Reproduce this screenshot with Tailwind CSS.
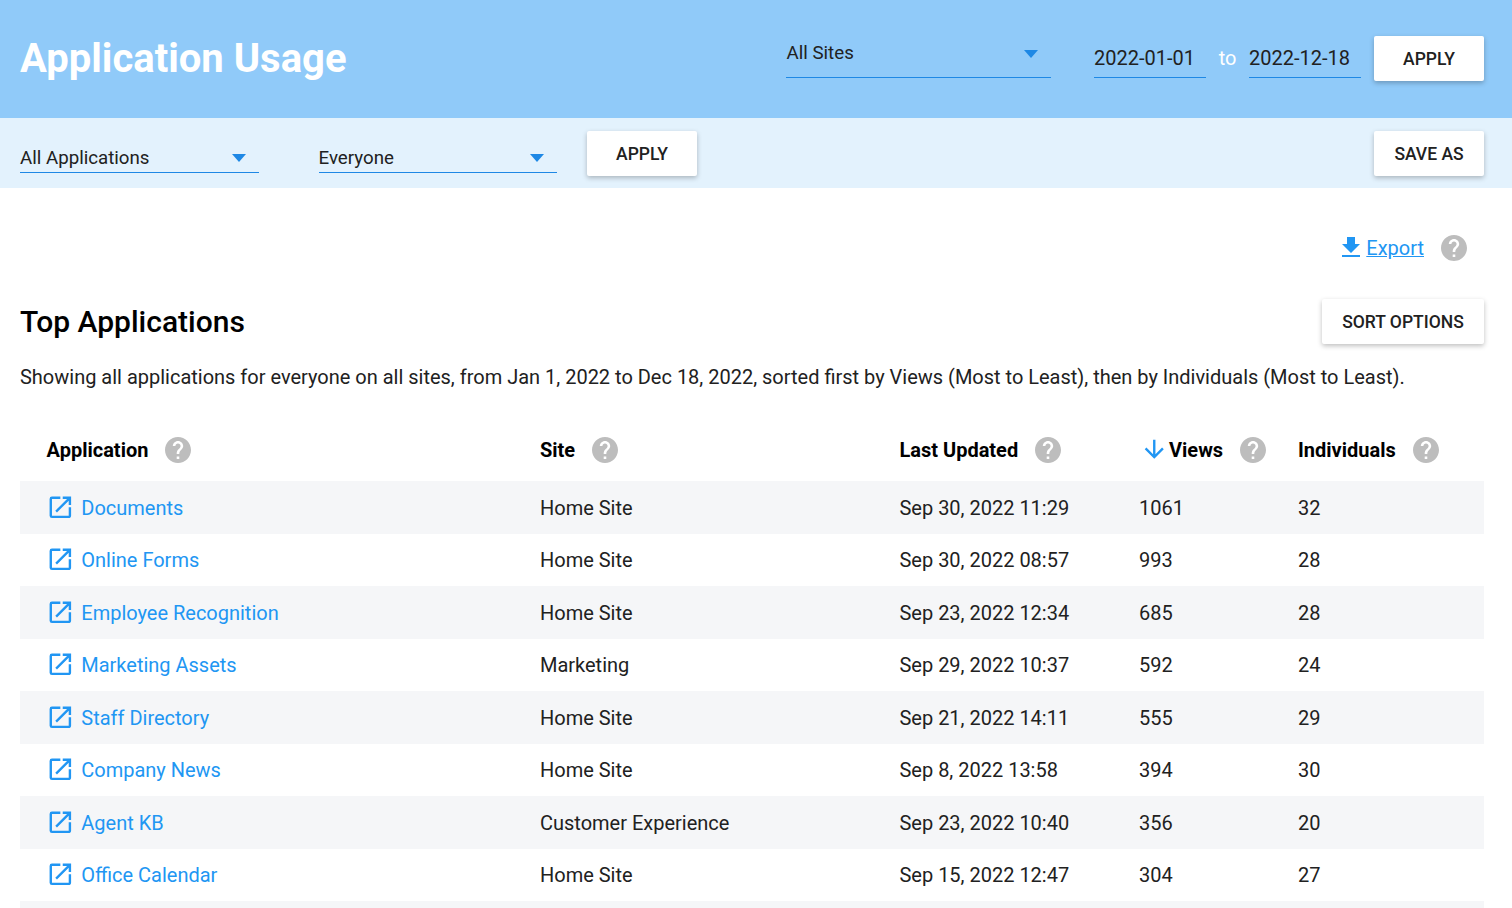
<!DOCTYPE html>
<html><head><meta charset="utf-8"><script src="https://cdn.jsdelivr.net/npm/@tailwindcss/browser@4"></script></head>
<body class="font-[Roboto,sans-serif] text-[19.99px] text-[#212121] bg-white h-[908px] overflow-hidden">
<header class="h-[118px] bg-[#90caf9] flex items-start pl-5 pr-[28px]">
  <h1 class="text-[40px] leading-[44px] font-bold text-white mt-[37px]">Application Usage</h1>
  <div class="ml-auto w-[265px] h-[36px] mt-[42px] border-b border-[#1e88e5] flex justify-between pr-[13px] text-[18.72px] leading-[22px]"><span class="ml-[0.5px]">All Sites</span><svg class="w-[14px] h-[8px] mt-[8px]" viewBox="0 0 14 8"><path d="M0 0h14L7 8z" fill="#1e88e5"/></svg></div>
  <div class="ml-[43px] w-[112px] h-[36px] mt-[42px] border-b border-[#1e88e5] leading-[33px]">2022-01-01</div>
  <div class="w-[43px] mt-[42px] text-center text-white leading-[33px]">to</div>
  <div class="w-[112px] h-[36px] mt-[42px] border-b border-[#1e88e5] leading-[33px]">2022-12-18</div>
  <button class="ml-[13px] mt-[36px] w-[110px] h-[45px] pt-[2px] bg-white rounded-[2px] shadow-[0_2px_5px_rgba(0,0,0,0.25)] text-[17.5px] font-medium">APPLY</button>
</header>
<div class="h-[70px] bg-[#e3f2fd] flex items-start pl-5 pr-[28px]">
  <div class="w-[239px] h-[31px] mt-[24px] border-b border-[#1e88e5] flex justify-between pr-[13px] text-[18.72px] leading-[33px]"><span>All Applications</span><svg class="w-[14px] h-[8px] mt-[12px]" viewBox="0 0 14 8"><path d="M0 0h14L7 8z" fill="#1e88e5"/></svg></div>
  <div class="ml-[60px] w-[238px] h-[31px] mt-[24px] border-b border-[#1e88e5] flex justify-between pr-[13px] text-[18.72px] leading-[33px]"><span class="-ml-[0.5px]">Everyone</span><svg class="w-[14px] h-[8px] mt-[12px]" viewBox="0 0 14 8"><path d="M0 0h14L7 8z" fill="#1e88e5"/></svg></div>
  <button class="ml-[30px] mt-[13px] w-[110px] h-[45px] pt-[2px] bg-white rounded-[2px] shadow-[0_2px_5px_rgba(0,0,0,0.25)] text-[17.5px] font-medium">APPLY</button>
  <button class="ml-auto mt-[13px] w-[110px] h-[45px] pt-[2px] bg-white rounded-[2px] shadow-[0_2px_5px_rgba(0,0,0,0.25)] text-[17.5px] font-medium">SAVE AS</button>
</div>
<main class="px-5 pr-[28px]">
  <div class="flex justify-end items-center h-[26px] mt-[47px] pr-[17px]">
    <svg class="w-[18px] h-[20px] mr-[6px] -mt-[2px]" viewBox="0 0 18 20"><path d="M5 0h8v7h5l-9 9-9-9h5zM0 18h18v2H0z" fill="#2196f3"/></svg>
    <a class="text-[#2196f3] underline pt-[2px]">Export</a>
    <svg class="w-[26px] h-[26px] ml-[17px]" viewBox="2 2 20 20"><path fill="#bdbdbd" d="M12 2C6.48 2 2 6.48 2 12s4.48 10 10 10 10-4.48 10-10S17.52 2 12 2zm1 17h-2v-2h2v2zm2.07-7.75l-.9.92C13.45 12.9 13 13.5 13 15h-2v-.5c0-1.1.45-2.1 1.17-2.83l1.24-1.26c.37-.36.59-.86.59-1.41 0-1.1-.9-2-2-2s-2 .9-2 2H8c0-2.21 1.79-4 4-4s4 1.79 4 4c0 .88-.36 1.68-.93 2.25z"/></svg>
  </div>
  <div class="flex justify-between items-center mt-[37px] h-[46px]">
    <h2 class="text-[30px] font-medium text-black">Top Applications</h2>
    <button class="w-[162px] h-[45px] pt-[2px] bg-white rounded-[2px] shadow-[0_2px_5px_rgba(0,0,0,0.25)] text-[17.5px] font-medium">SORT OPTIONS</button>
  </div>
  <p class="mt-[19px] leading-[28px]">Showing all applications for everyone on all sites, from Jan 1, 2022 to Dec 18, 2022, sorted first by Views (Most to Least), then by Individuals (Most to Least).</p>
  <div class="mt-[28px] w-[1464px] grid grid-cols-[493px_359.5px_239.5px_159px_213px] grid-rows-[62px_repeat(8,52.5px)_7px] items-center [&>*]:h-full [&>*]:flex [&>*]:items-center [&>*]:pt-[2.8px] [&_svg]:-mt-[3.6px]">
    <div class="font-bold text-black pl-[26.6px]">Application<svg class="w-[26px] h-[26px] ml-[17px]" viewBox="2 2 20 20"><path fill="#bdbdbd" d="M12 2C6.48 2 2 6.48 2 12s4.48 10 10 10 10-4.48 10-10S17.52 2 12 2zm1 17h-2v-2h2v2zm2.070-7.750l-.9.92C13.45 12.9 13 13.5 13 15h-2v-.5c0-1.1.45-2.1 1.17-2.83l1.24-1.26c.37-.36.59-.86.59-1.41 0-1.1-.9-2-2-2s-2 .9-2 2H8c0-2.21 1.79-4 4-4s4 1.79 4 4c0 .88-.36 1.68-.93 2.25z"/></svg></div>
    <div class="font-bold text-black pl-[27px]">Site<svg class="w-[26px] h-[26px] ml-[17px]" viewBox="2 2 20 20"><path fill="#bdbdbd" d="M12 2C6.48 2 2 6.48 2 12s4.48 10 10 10 10-4.48 10-10S17.52 2 12 2zm1 17h-2v-2h2v2zm2.070-7.750l-.9.92C13.45 12.9 13 13.5 13 15h-2v-.5c0-1.1.45-2.1 1.17-2.83l1.24-1.26c.37-.36.59-.86.59-1.41 0-1.1-.9-2-2-2s-2 .9-2 2H8c0-2.21 1.79-4 4-4s4 1.79 4 4c0 .88-.36 1.68-.93 2.25z"/></svg></div>
    <div class="font-bold text-black pl-[27px]">Last Updated<svg class="w-[26px] h-[26px] ml-[17px]" viewBox="2 2 20 20"><path fill="#bdbdbd" d="M12 2C6.48 2 2 6.48 2 12s4.48 10 10 10 10-4.48 10-10S17.52 2 12 2zm1 17h-2v-2h2v2zm2.070-7.750l-.9.92C13.45 12.9 13 13.5 13 15h-2v-.5c0-1.1.45-2.1 1.17-2.83l1.24-1.26c.37-.36.59-.86.59-1.41 0-1.1-.9-2-2-2s-2 .9-2 2H8c0-2.21 1.79-4 4-4s4 1.79 4 4c0 .88-.36 1.68-.93 2.25z"/></svg></div>
    <div class="font-bold text-black pl-[27.5px]"><svg class="w-[28.5px] h-[28.500px] mr-[1px]" viewBox="0 0 24 24"><path fill="#2196f3" d="M20 12l-1.41-1.41L13 16.17V4h-2v12.17l-5.58-5.59L4 12l8 8 8-8z"/></svg>Views<svg class="w-[26px] h-[26px] ml-[17px]" viewBox="2 2 20 20"><path fill="#bdbdbd" d="M12 2C6.48 2 2 6.48 2 12s4.48 10 10 10 10-4.48 10-10S17.52 2 12 2zm1 17h-2v-2h2v2zm2.070-7.750l-.9.92C13.45 12.9 13 13.5 13 15h-2v-.5c0-1.1.45-2.1 1.17-2.83l1.24-1.26c.37-.36.59-.86.59-1.41 0-1.1-.9-2-2-2s-2 .9-2 2H8c0-2.21 1.79-4 4-4s4 1.79 4 4c0 .88-.36 1.68-.93 2.25z"/></svg></div>
    <div class="font-bold text-black pl-[27px]">Individuals<svg class="w-[26px] h-[26px] ml-[17px]" viewBox="2 2 20 20"><path fill="#bdbdbd" d="M12 2C6.48 2 2 6.48 2 12s4.48 10 10 10 10-4.48 10-10S17.52 2 12 2zm1 17h-2v-2h2v2zm2.070-7.750l-.9.92C13.45 12.9 13 13.5 13 15h-2v-.5c0-1.1.45-2.1 1.17-2.83l1.24-1.26c.37-.36.59-.86.59-1.41 0-1.1-.9-2-2-2s-2 .9-2 2H8c0-2.21 1.79-4 4-4s4 1.79 4 4c0 .88-.36 1.68-.93 2.25z"/></svg></div>

    <div class="bg-[#f5f6f8] pl-[26px] text-[#2196f3]"><svg class="w-[28.7px] h-[28.7px] mr-[6.6px]" viewBox="0 0 24 24"><path fill="#2196f3" d="M19 19H5V5h7V3H5a2 2 0 0 0-2 2v14a2 2 0 0 0 2 2h14c1.100 0 2-.9 2-2v-7h-2v7zM14 3v2h3.590l-9.830 9.830 1.410 1.410L19 6.410V10h2V3h-7z"/></svg>Documents</div><div class="bg-[#f5f6f8] pl-[27px]">Home Site</div><div class="bg-[#f5f6f8] pl-[27px]">Sep 30, 2022 11:29</div><div class="bg-[#f5f6f8] pl-[27px]">1061</div><div class="bg-[#f5f6f8] pl-[27px]">32</div>
    <div class="pl-[26px] text-[#2196f3]"><svg class="w-[28.7px] h-[28.7px] mr-[6.6px]" viewBox="0 0 24 24"><path fill="#2196f3" d="M19 19H5V5h7V3H5a2 2 0 0 0-2 2v14a2 2 0 0 0 2 2h14c1.100 0 2-.9 2-2v-7h-2v7zM14 3v2h3.590l-9.830 9.830 1.410 1.410L19 6.410V10h2V3h-7z"/></svg>Online Forms</div><div class="pl-[27px]">Home Site</div><div class="pl-[27px]">Sep 30, 2022 08:57</div><div class="pl-[27px]">993</div><div class="pl-[27px]">28</div>
    <div class="bg-[#f5f6f8] pl-[26px] text-[#2196f3]"><svg class="w-[28.7px] h-[28.7px] mr-[6.6px]" viewBox="0 0 24 24"><path fill="#2196f3" d="M19 19H5V5h7V3H5a2 2 0 0 0-2 2v14a2 2 0 0 0 2 2h14c1.100 0 2-.9 2-2v-7h-2v7zM14 3v2h3.590l-9.830 9.830 1.410 1.410L19 6.410V10h2V3h-7z"/></svg>Employee Recognition</div><div class="bg-[#f5f6f8] pl-[27px]">Home Site</div><div class="bg-[#f5f6f8] pl-[27px]">Sep 23, 2022 12:34</div><div class="bg-[#f5f6f8] pl-[27px]">685</div><div class="bg-[#f5f6f8] pl-[27px]">28</div>
    <div class="pl-[26px] text-[#2196f3]"><svg class="w-[28.7px] h-[28.7px] mr-[6.6px]" viewBox="0 0 24 24"><path fill="#2196f3" d="M19 19H5V5h7V3H5a2 2 0 0 0-2 2v14a2 2 0 0 0 2 2h14c1.100 0 2-.9 2-2v-7h-2v7zM14 3v2h3.590l-9.830 9.830 1.410 1.410L19 6.410V10h2V3h-7z"/></svg>Marketing Assets</div><div class="pl-[27px]">Marketing</div><div class="pl-[27px]">Sep 29, 2022 10:37</div><div class="pl-[27px]">592</div><div class="pl-[27px]">24</div>
    <div class="bg-[#f5f6f8] pl-[26px] text-[#2196f3]"><svg class="w-[28.7px] h-[28.7px] mr-[6.6px]" viewBox="0 0 24 24"><path fill="#2196f3" d="M19 19H5V5h7V3H5a2 2 0 0 0-2 2v14a2 2 0 0 0 2 2h14c1.100 0 2-.9 2-2v-7h-2v7zM14 3v2h3.590l-9.830 9.830 1.410 1.410L19 6.410V10h2V3h-7z"/></svg>Staff Directory</div><div class="bg-[#f5f6f8] pl-[27px]">Home Site</div><div class="bg-[#f5f6f8] pl-[27px]">Sep 21, 2022 14:11</div><div class="bg-[#f5f6f8] pl-[27px]">555</div><div class="bg-[#f5f6f8] pl-[27px]">29</div>
    <div class="pl-[26px] text-[#2196f3]"><svg class="w-[28.7px] h-[28.7px] mr-[6.6px]" viewBox="0 0 24 24"><path fill="#2196f3" d="M19 19H5V5h7V3H5a2 2 0 0 0-2 2v14a2 2 0 0 0 2 2h14c1.100 0 2-.9 2-2v-7h-2v7zM14 3v2h3.590l-9.830 9.830 1.410 1.410L19 6.410V10h2V3h-7z"/></svg>Company News</div><div class="pl-[27px]">Home Site</div><div class="pl-[27px]">Sep 8, 2022 13:58</div><div class="pl-[27px]">394</div><div class="pl-[27px]">30</div>
    <div class="bg-[#f5f6f8] pl-[26px] text-[#2196f3]"><svg class="w-[28.7px] h-[28.7px] mr-[6.6px]" viewBox="0 0 24 24"><path fill="#2196f3" d="M19 19H5V5h7V3H5a2 2 0 0 0-2 2v14a2 2 0 0 0 2 2h14c1.100 0 2-.9 2-2v-7h-2v7zM14 3v2h3.590l-9.830 9.830 1.410 1.410L19 6.410V10h2V3h-7z"/></svg>Agent KB</div><div class="bg-[#f5f6f8] pl-[27px]">Customer Experience</div><div class="bg-[#f5f6f8] pl-[27px]">Sep 23, 2022 10:40</div><div class="bg-[#f5f6f8] pl-[27px]">356</div><div class="bg-[#f5f6f8] pl-[27px]">20</div>
    <div class="pl-[26px] text-[#2196f3]"><svg class="w-[28.7px] h-[28.7px] mr-[6.6px]" viewBox="0 0 24 24"><path fill="#2196f3" d="M19 19H5V5h7V3H5a2 2 0 0 0-2 2v14a2 2 0 0 0 2 2h14c1.100 0 2-.9 2-2v-7h-2v7zM14 3v2h3.590l-9.830 9.830 1.410 1.410L19 6.410V10h2V3h-7z"/></svg>Office Calendar</div><div class="pl-[27px]">Home Site</div><div class="pl-[27px]">Sep 15, 2022 12:47</div><div class="pl-[27px]">304</div><div class="pl-[27px]">27</div>
    <div class="bg-[#f5f6f8]"></div><div class="bg-[#f5f6f8]"></div><div class="bg-[#f5f6f8]"></div><div class="bg-[#f5f6f8]"></div><div class="bg-[#f5f6f8]"></div>
  </div>
</main>
</body></html>
